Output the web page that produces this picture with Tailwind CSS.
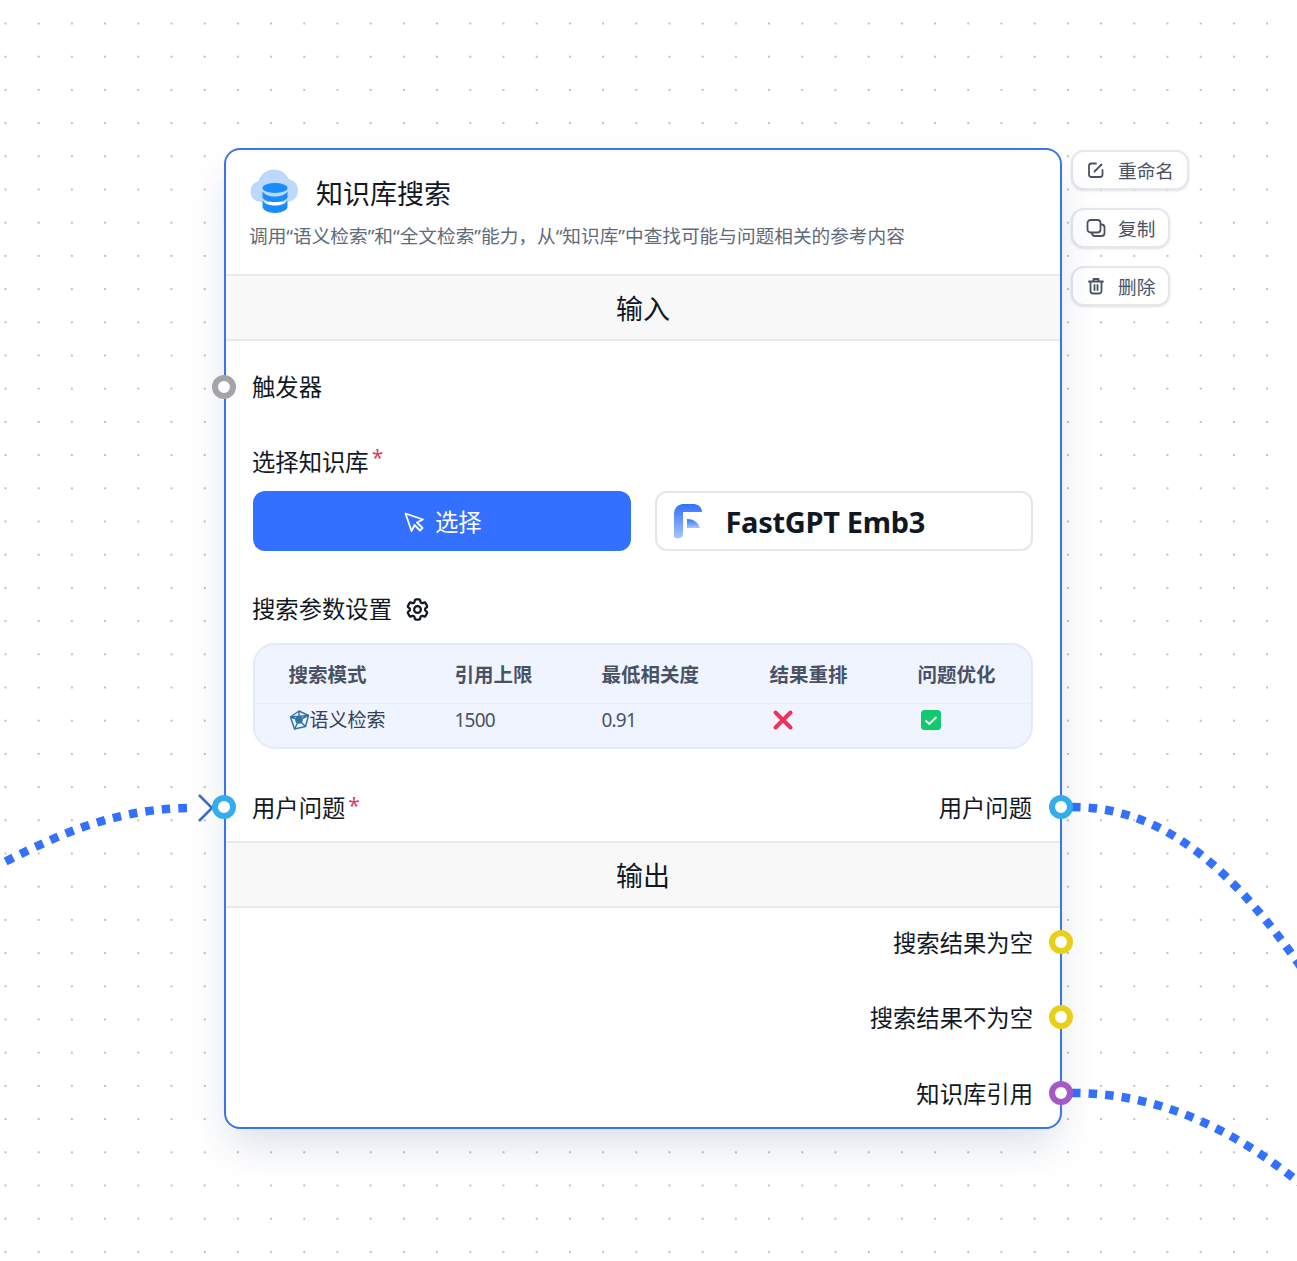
<!DOCTYPE html>
<html lang="zh">
<head>
  <meta charset="UTF-8">
  <title>知识库搜索</title>
  <script src="https://cdn.jsdelivr.net/npm/@tailwindcss/browser@4"></script>
</head>
<body class="bg-white font-['Noto_Sans','Noto_Sans_CJK_SC',sans-serif] text-[#111824]">
  <div class="relative w-[1297px] h-[1261px] overflow-hidden">
    <!-- dot grid -->
    <svg class="absolute inset-0" width="1297" height="1261">
      <defs>
        <pattern id="dots" x="-27.7" y="-9.7" width="33.2" height="33.2" patternUnits="userSpaceOnUse">
          <circle cx="33.2" cy="33.2" r="1" fill="#a9a9a9"/>
          <circle cx="0" cy="33.2" r="1" fill="#a9a9a9"/>
          <circle cx="33.2" cy="0" r="1" fill="#a9a9a9"/>
          <circle cx="0" cy="0" r="1" fill="#a9a9a9"/>
        </pattern>
      </defs>
      <rect width="1297" height="1261" fill="url(#dots)"/>
    </svg>

    <!-- edges -->
    <svg class="absolute inset-0" width="1297" height="1261" fill="none" stroke="#3370ff" stroke-width="8.5" stroke-dasharray="8.500 8.100">
      <path d="M187 808 C 105 810, 50 838, -30 880"/>
      <path d="M1072 807 C 1165 807, 1235 870, 1310 980"/>
      <path d="M1072 1093 C 1160 1093, 1240 1130, 1320 1200"/>
    </svg>

    <!-- side actions -->
    <div class="absolute left-[1071px] top-[150px] flex flex-col items-start gap-[18px] text-[18.67px] text-[#485264]">
      <div class="h-[40px] flex items-center gap-[12px] pl-[13px] pr-[13px] bg-white border-2 border-[#e4e7ee] rounded-[13px] shadow-sm">
        <svg width="20" height="20" viewBox="0 0 20 20" fill="none" stroke="#485264" stroke-width="1.8" stroke-linecap="round" stroke-linejoin="round"><path d="M10 3.500H5.500a2.500 2.500 0 0 0-2.500 2.500v8.500A2.500 2.500 0 0 0 5.500 17H14a2.500 2.500 0 0 0 2.500-2.500V10"/><path d="M8.500 11.500 15.500 4.500"/></svg>
        <span class="mt-[2px]">重命名</span>
      </div>
      <div class="h-[40px] flex items-center gap-[12px] pl-[13px] pr-[13px] bg-white border-2 border-[#e4e7ee] rounded-[13px] shadow-sm">
        <svg width="20" height="20" viewBox="0 0 20 20" fill="none" stroke="#485264" stroke-width="1.8" stroke-linejoin="round"><rect x="1.500" y="2" width="13" height="12.500" rx="3"/><path d="M14.500 6.500h1a3 3 0 0 1 3 3V15a3 3 0 0 1-3 3H9a3 3 0 0 1-3-3v-.500"/></svg>
        <span class="mt-[2px]">复制</span>
      </div>
      <div class="h-[40px] flex items-center gap-[12px] pl-[13px] pr-[13px] bg-white border-2 border-[#e4e7ee] rounded-[13px] shadow-sm">
        <svg width="20" height="20" viewBox="0 0 20 20" fill="none" stroke="#485264" stroke-width="1.800" stroke-linecap="round" stroke-linejoin="round"><path d="M3 5.500h14M7.500 5.500V3h5v2.500M4.500 5.500V15a2.500 2.500 0 0 0 2.500 2.500h6a2.500 2.500 0 0 0 2.500-2.500V5.500M8.500 9v5M11.500 9v5"/></svg>
        <span class="mt-[2px]">删除</span>
      </div>
    </div>

    <!-- node card -->
    <div class="absolute left-[224px] top-[148px] w-[838px] h-[981px] bg-white border-2 border-[#3a74ee] rounded-[16px] shadow-[0_20px_40px_-6px_rgba(19,51,107,0.16)] flex flex-col">
      <div class="h-[124px] pl-[24px] pr-[24px] pt-[19px]">
        <div class="flex items-center h-[48px]">
          <svg class="-translate-y-[1px]" width="50" height="46" viewBox="0 0 50 46">
            <path fill="#bcd9fb" d="M11 33C4.500 33 .500 28 .500 22.500c0-5 3-9 8-10.500C10.500 5 17 .500 24 .500c6.500 0 12 3.500 14.500 9.500C44.500 11 48 16 48 21.500 48 28 43.500 33 37 33Z"/>
            <ellipse cx="25" cy="19" rx="12.500" ry="5" fill="#1a8cff"/>
            <path fill="#1a8cff" d="M12.500 22.500c2 3 7 5 12.500 5s10.500-2 12.500-5V28c0 2.800-5.600 5-12.500 5s-12.500-2.200-12.500-5Z"/>
            <path fill="#1a8cff" d="M12.500 31.500c2 3 7 5 12.500 5s10.500-2 12.500-5V38c0 2.800-5.600 6-12.500 6s-12.500-3.200-12.500-6Z"/>
          </svg>
          <span class="ml-[16px] mt-[2px] text-[27px] leading-[48px]">知识库搜索</span>
        </div>
        <p class="mt-[5px] -ml-[1px] text-[18.67px] leading-[28px] text-[#5f6a7a]">调用“语义检索”和“全文检索”能力，从“知识库”中查找可能与问题相关的参考内容</p>
      </div>

      <div class="h-[67px] pt-[4px] flex items-center justify-center bg-[#f8f8f8] border-y-2 border-[#e8e9ec] text-[27px]">输入</div>

      <div class="px-[27px]">
        <div class="-ml-[1px] mt-[28px] h-[36px] flex items-center text-[23.33px]">触发器</div>

        <div class="-ml-[1px] mt-[39px] h-[36px] flex items-center text-[23.33px]">选择知识库<span class="relative -top-[4px] ml-[3px] text-[21px] text-[#e0405e]">*</span></div>

        <div class="mt-[11px] grid grid-cols-2 gap-[23px]">
          <div class="h-[60px] mr-[1px] flex items-center justify-center gap-[9px] bg-[#3370ff] rounded-[12px] text-white text-[23.33px]">
            <svg width="24" height="24" viewBox="0 0 24 24" fill="none" stroke="#fff" stroke-width="1.800" stroke-linejoin="round"><path d="M3.500 4.500 21 10.500l-6 3 5.500 5.500-2.500 2.500-5.500-5.500-3 6Z"/></svg>
            <span class="mt-[2px]">选择</span>
          </div>
          <div class="h-[60px] flex items-center pl-[17px] bg-white border-2 border-[#e4e6ec] rounded-[12px]">
            <svg class="translate-y-[1px]" width="30" height="37" viewBox="0 0 30 37">
              <defs>
                <linearGradient id="fg" x1="0" y1="0" x2="0" y2="1"><stop offset="0" stop-color="#3370ff"/><stop offset="1" stop-color="#a9c4ff"/></linearGradient>
              </defs>
              <path fill="url(#fg)" d="M0 10C0 4 4 0 10 0H19C24 0 28 3 28 8H9V30C9 34 4 36 0 33Z"/>
              <path fill="url(#fg)" d="M13 15c6 0 11 3 13 9H13Z"/>
            </svg>
            <span class="ml-[22px] mt-[2px] text-[29px] font-bold tracking-[-0.3px]">FastGPT Emb3</span>
          </div>
        </div>

        <div class="-ml-[1px] mt-[40px] h-[36px] flex items-center text-[23.33px]">
          <span>搜索参数设置</span>
          <svg class="ml-[12px]" width="27" height="27" viewBox="0 0 24 24" fill="none" stroke="#111824" stroke-width="2" stroke-linejoin="round"><path d="M9.594 3.940c.09-.542.56-.94 1.110-.94h2.593c.55 0 1.020.398 1.110.94l.213 1.281c.063.374.313.686.645.870.074.040.147.083.220.127.325.196.720.257 1.075.124l1.217-.456a1.125 1.125 0 0 1 1.370.490l1.296 2.247a1.125 1.125 0 0 1-.260 1.431l-1.003.827c-.293.241-.438.613-.430.992a7.723 7.723 0 0 1 0 .255c-.008.378.137.750.430.991l1.004.827c.424.350.534.955.260 1.430l-1.298 2.247a1.125 1.125 0 0 1-1.369.491l-1.217-.456c-.355-.133-.750-.072-1.076.124a6.470 6.470 0 0 1-.220.128c-.331.183-.581.495-.644.869l-.213 1.281c-.09.543-.56.940-1.110.940h-2.594c-.55 0-1.019-.398-1.110-.940l-.213-1.281c-.062-.374-.312-.686-.644-.870a6.520 6.520 0 0 1-.220-.127c-.325-.196-.720-.257-1.076-.124l-1.217.456a1.125 1.125 0 0 1-1.369-.490l-1.297-2.247a1.125 1.125 0 0 1 .260-1.431l1.004-.827c.292-.240.437-.613.430-.991a6.932 6.932 0 0 1 0-.255c.007-.380-.138-.751-.430-.992l-1.004-.827a1.125 1.125 0 0 1-.260-1.430l1.297-2.247a1.125 1.125 0 0 1 1.370-.491l1.216.456c.356.133.751.072 1.076-.124.072-.044.146-.086.220-.128.332-.183.582-.495.644-.869l.214-1.280Z"/><circle cx="12" cy="12" r="3"/></svg>
        </div>

        <div class="mt-[16px] h-[106px] -ml-[0.5px] bg-[#f0f4ff] border-2 border-[#e1eafa] rounded-[22px] text-[19px] text-[#485264]">
          <div class="h-[59px] pl-[34px] pt-[2px] grid grid-cols-[166px_147px_168px_148px_1fr] items-center text-[19.5px] font-bold border-b border-[#e8eef9]">
            <span>搜索模式</span><span>引用上限</span><span>最低相关度</span><span>结果重排</span><span>问题优化</span>
          </div>
          <div class="h-[43px] pl-[34px] pb-[11px] grid grid-cols-[166px_147px_168px_148px_1fr] items-center">
            <span class="flex items-center text-[#344054]">
              <svg width="21" height="21" viewBox="0 0 21 21" fill="none" stroke="#2f74a8" stroke-width="1.500" stroke-linejoin="round"><path d="M10 1 19.500 5.500 16.500 16.500 5.500 19 1.500 7Z"/><path d="M10 1 10 10M19.500 5.500 10 10M16.500 16.500 10 10M5.500 19 10 10M1.500 7 10 10M1.500 7 19.500 5.500"/><circle cx="10" cy="10" r="3" fill="#2f74a8"/></svg>
              <span>语义检索</span>
            </span>
            <span class="tracking-[-0.8px]">1500</span>
            <span class="tracking-[-0.8px]">0.91</span>
            <svg class="ml-[2px]" width="22" height="22" viewBox="0 0 22 22" stroke="#f0325a" stroke-width="4" stroke-linecap="round"><path d="M3.500 3.500 18.500 18.500M18.500 3.500 3.500 18.500"/></svg>
            <svg class="ml-[3px]" width="20" height="20" viewBox="0 0 20 20"><rect width="20" height="20" rx="3.500" fill="#12c970"/><path d="M4.500 10.500 8.300 14 15.500 7" fill="none" stroke="#fff" stroke-width="1.800"/></svg>
          </div>
        </div>

        <div class="-ml-[1px] mr-[1px] mt-[41px] h-[36px] flex items-center justify-between text-[23.33px]">
          <span>用户问题<span class="relative -top-[4px] ml-[3px] text-[21px] text-[#e0405e]">*</span></span>
          <span>用户问题</span>
        </div>
      </div>

      <div class="mt-[15px] h-[67px] pt-[4px] flex items-center justify-center bg-[#f8f8f8] border-y-2 border-[#e8e9ec] text-[27px]">输出</div>

      <div class="pl-[26px] pr-[27px] flex flex-col items-end text-[23.33px]">
        <div class="mt-[17px] h-[36px] flex items-center">搜索结果为空</div>
        <div class="mt-[39px] h-[36px] flex items-center">搜索结果不为空</div>
        <div class="mt-[40px] h-[36px] flex items-center">知识库引用</div>
      </div>

      <!-- handles -->
      <span class="absolute left-[-14px] top-[225px] w-[24px] h-[24px] rounded-full bg-white border-[6px] border-[#a4a4a8]"></span>
      <svg class="absolute left-[-29px] top-[644px]" width="20" height="28" viewBox="0 0 20 28" fill="none" stroke="#3b6cc4" stroke-width="2.500"><path d="M2 1 15 14 2 27"/></svg>
      <span class="absolute left-[-14px] top-[645px] w-[24px] h-[24px] rounded-full bg-white border-[6px] border-[#33adee]"></span>
      <span class="absolute left-[823px] top-[645px] w-[24px] h-[24px] rounded-full bg-white border-[6px] border-[#33adee]"></span>
      <span class="absolute left-[823px] top-[780px] w-[24px] h-[24px] rounded-full bg-white border-[6px] border-[#e8d019]"></span>
      <span class="absolute left-[823px] top-[855px] w-[24px] h-[24px] rounded-full bg-white border-[6px] border-[#e8d019]"></span>
      <span class="absolute left-[823px] top-[931px] w-[24px] h-[24px] rounded-full bg-white border-[6px] border-[#a558c8]"></span>
    </div>
  </div>
</body>
</html>
